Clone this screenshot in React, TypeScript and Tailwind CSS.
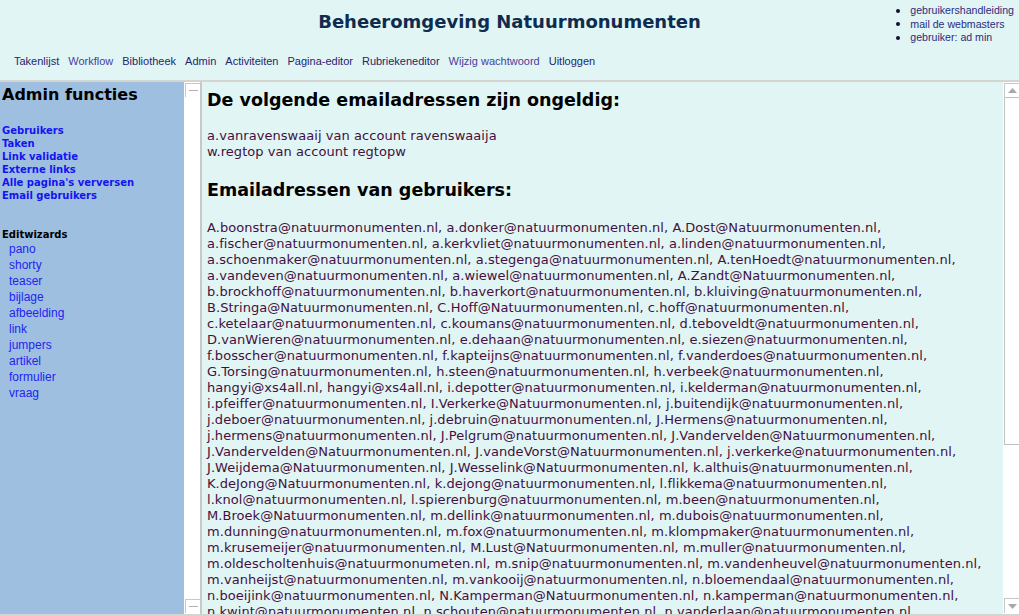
import React from "react";

const emails = [
  "A.boonstra@natuurmonumenten.nl, a.donker@natuurmonumenten.nl, A.Dost@Natuurmonumenten.nl,",
  "a.fischer@natuurmonumenten.nl, a.kerkvliet@natuurmonumenten.nl, a.linden@natuurmonumenten.nl,",
  "a.schoenmaker@natuurmonumenten.nl, a.stegenga@natuurmonumenten.nl, A.tenHoedt@natuurmonumenten.nl,",
  "a.vandeven@natuurmonumenten.nl, a.wiewel@natuurmonumenten.nl, A.Zandt@Natuurmonumenten.nl,",
  "b.brockhoff@natuurmonumenten.nl, b.haverkort@natuurmonumenten.nl, b.kluiving@natuurmonumenten.nl,",
  "B.Stringa@Natuurmonumenten.nl, C.Hoff@Natuurmonumenten.nl, c.hoff@natuurmonumenten.nl,",
  "c.ketelaar@natuurmonumenten.nl, c.koumans@natuurmonumenten.nl, d.teboveldt@natuurmonumenten.nl,",
  "D.vanWieren@natuurmonumenten.nl, e.dehaan@natuurmonumenten.nl, e.siezen@natuurmonumenten.nl,",
  "f.bosscher@natuurmonumenten.nl, f.kapteijns@natuurmonumenten.nl, f.vanderdoes@natuurmonumenten.nl,",
  "G.Torsing@natuurmonumenten.nl, h.steen@natuurmonumenten.nl, h.verbeek@natuurmonumenten.nl,",
  "hangyi@xs4all.nl, hangyi@xs4all.nl, i.depotter@natuurmonumenten.nl, i.kelderman@natuurmonumenten.nl,",
  "i.pfeiffer@natuurmonumenten.nl, I.Verkerke@Natuurmonumenten.nl, j.buitendijk@natuurmonumenten.nl,",
  "j.deboer@natuurmonumenten.nl, j.debruin@natuurmonumenten.nl, J.Hermens@natuurmonumenten.nl,",
  "j.hermens@natuurmonumenten.nl, J.Pelgrum@natuurmonumenten.nl, J.Vandervelden@Natuurmonumenten.nl,",
  "J.Vandervelden@Natuurmonumenten.nl, J.vandeVorst@Natuurmonumenten.nl, j.verkerke@natuurmonumenten.nl,",
  "J.Weijdema@Natuurmonumenten.nl, J.Wesselink@Natuurmonumenten.nl, k.althuis@natuurmonumenten.nl,",
  "K.deJong@Natuurmonumenten.nl, k.dejong@natuurmonumenten.nl, l.flikkema@natuurmonumenten.nl,",
  "l.knol@natuurmonumenten.nl, l.spierenburg@natuurmonumenten.nl, m.been@natuurmonumenten.nl,",
  "M.Broek@Natuurmonumenten.nl, m.dellink@natuurmonumenten.nl, m.dubois@natuurmonumenten.nl,",
  "m.dunning@natuurmonumenten.nl, m.fox@natuurmonumenten.nl, m.klompmaker@natuurmonumenten.nl,",
  "m.krusemeijer@natuurmonumenten.nl, M.Lust@Natuurmonumenten.nl, m.muller@natuurmonumenten.nl,",
  "m.oldescholtenhuis@natuurmonumeten.nl, m.snip@natuurmonumenten.nl, m.vandenheuvel@natuurmonumenten.nl,",
  "m.vanheijst@natuurmonumenten.nl, m.vankooij@natuurmonumenten.nl, n.bloemendaal@natuurmonumenten.nl,",
  "n.boeijink@natuurmonumenten.nl, N.Kamperman@Natuurmonumenten.nl, n.kamperman@natuurmonumenten.nl,",
  "n.kwint@natuurmonumenten.nl, n.schouten@natuurmonumenten.nl, n.vanderlaan@natuurmonumenten.nl,",
];

const navItems: { label: string; visited?: boolean }[] = [
  { label: "Takenlijst" },
  { label: "Workflow", visited: true },
  { label: "Bibliotheek" },
  { label: "Admin" },
  { label: "Activiteiten" },
  { label: "Pagina-editor" },
  { label: "Rubriekeneditor" },
  { label: "Wijzig wachtwoord", visited: true },
  { label: "Uitloggen" },
];

const adminLinks = [
  "Gebruikers",
  "Taken",
  "Link validatie",
  "Externe links",
  "Alle pagina's verversen",
  "Email gebruikers",
];

const wizards = [
  "pano",
  "shorty",
  "teaser",
  "bijlage",
  "afbeelding",
  "link",
  "jumpers",
  "artikel",
  "formulier",
  "vraag",
];

function DisabledArrow() {
  return (
    <svg width="9" height="5" viewBox="0 0 9 5">
      <rect x="0" y="2" width="9" height="1" fill="#b0b0b0" />
    </svg>
  );
}

function UpArrow() {
  return (
    <svg width="9" height="5" viewBox="0 0 9 5">
      <polygon points="4.5,0 9,5 0,5" fill="#a8a8a8" />
    </svg>
  );
}

function DownArrow() {
  return (
    <svg width="9" height="5" viewBox="0 0 9 5">
      <polygon points="0,0 9,0 4.5,5" fill="#a8a8a8" />
    </svg>
  );
}

export default function App() {
  return (
    <div className="w-[1019px] h-[616px] overflow-hidden flex flex-col bg-[#e1f5f5] font-['DejaVu_Sans',sans-serif]">
      {/* Header */}
      <header className="h-[80px] flex flex-col shrink-0">
        <div className="grid grid-cols-[1fr_auto_1fr] h-[48px]">
          <div />
          <h1 className="mt-[10px] text-[18px] leading-[24px] font-bold text-[#0f2b4d]">
            Beheeromgeving Natuurmonumenten
          </h1>
          <ul className="justify-self-end mt-[4px] mr-[5px] font-['Liberation_Sans',Arial,sans-serif] text-[10.6px] leading-[13.5px] text-[#2b2b7e]">
            {["gebruikershandleiding", "mail de webmasters", "gebruiker: ad min"].map((t) => (
              <li key={t} className="flex items-center">
                <span className="w-[4px] h-[4px] rounded-full bg-[#101030] mr-[10px]" />
                <span>{t}</span>
              </li>
            ))}
          </ul>
        </div>
        <nav className="mt-[6px] pl-[14px] flex gap-[9px] font-['Liberation_Sans',Arial,sans-serif] text-[11px] leading-[14px]">
          {navItems.map((n) => (
            <span key={n.label} className={n.visited ? "text-[#4a3c9c]" : "text-[#25256e]"}>
              {n.label}
            </span>
          ))}
        </nav>
      </header>

      {/* Frames */}
      <div className="flex-1 flex min-h-0 border-t-2 border-b-2 border-[#d4d4d0]">
        {/* Left frame */}
        <aside className="w-[184px] shrink-0 bg-[#9ebfdf] pl-[2px] pt-[2.5px] overflow-hidden">
          <h2 className="text-[16px] leading-[19px] font-bold text-black">Admin functies</h2>
          <div className="mt-[20px] flex flex-col text-[10px] leading-[13px] font-bold text-[#1414f0]">
            {adminLinks.map((l) => (
              <span key={l}>{l}</span>
            ))}
          </div>
          <div className="mt-[26px] text-[10px] leading-[13px] font-bold text-black">Editwizards</div>
          <div className="flex flex-col pl-[7px] font-['Liberation_Sans',Arial,sans-serif] text-[12px] leading-[16px] text-[#2323f5]">
            {wizards.map((w) => (
              <span key={w}>{w}</span>
            ))}
          </div>
        </aside>
        {/* Left scrollbar */}
        <div className="w-[16px] shrink-0 bg-white flex flex-col justify-between">
          <div className="mt-[1px] ml-[1px] h-[14px] border-l border-t border-[#c8c8c8] flex items-center justify-center">
            <DisabledArrow />
          </div>
          <div className="mb-[1px] ml-[1px] h-[14px] border-l border-t border-[#c8c8c8] flex items-center justify-center">
            <DisabledArrow />
          </div>
        </div>

        {/* Main frame */}
        <main className="flex-1 min-w-0 border-l-2 border-[#c8c8c8] pl-[5px] pt-[8px] overflow-hidden bg-[#e1f5f5]">
          <h2 className="text-[17.5px] leading-[21px] font-bold text-black whitespace-nowrap">
            De volgende emailadressen zijn ongeldig:
          </h2>
          <div className="mt-[17px] text-[13px] leading-[16px] tracking-[0.05px] text-[#44103c]">
            <div>a.vanravenswaaij van account ravenswaaija</div>
            <div>w.regtop van account regtopw</div>
          </div>
          <h2 className="mt-[19.5px] text-[17.5px] leading-[21px] font-bold text-black whitespace-nowrap">
            Emailadressen van gebruikers:
          </h2>
          <div className="mt-[19.5px] text-[13px] leading-[16px] tracking-[0.05px] text-[#44103c]">
            {emails.map((e, i) => (
              <div key={i} className="whitespace-nowrap">
                {e}
              </div>
            ))}
          </div>
        </main>

        {/* Main scrollbar */}
        <div className="w-[16px] shrink-0 bg-white flex flex-col">
          <div className="mt-[1px] ml-[1px] h-[14px] border-l border-t border-[#c8c8c8] flex items-center justify-center">
            <UpArrow />
          </div>
          <div className="ml-[1px] h-[348px] border-l border-t border-b border-[#c0c0c0] bg-white" />
          <div className="flex-1" />
          <div className="mb-[1px] ml-[1px] h-[15px] border-l border-t border-[#c8c8c8] flex items-center justify-center">
            <DownArrow />
          </div>
        </div>
      </div>
    </div>
  );
}
